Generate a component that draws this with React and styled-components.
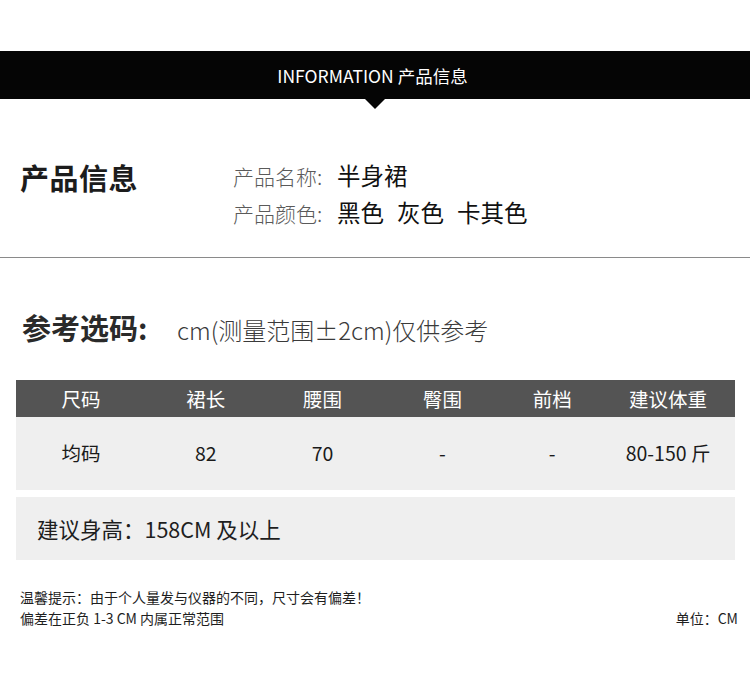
import React from "react";
import styled, { createGlobalStyle } from "styled-components";

const Global = createGlobalStyle`
  html, body { margin: 0; padding: 0; background: #fff; }
  body { font-family: "Noto Sans CJK SC", "Noto Sans", sans-serif; color: #222; }
`;

const Page = styled.div`
  width: 750px;
  height: 683px;
  overflow: hidden;
  padding-top: 51px;
  box-sizing: border-box;
`;

const Banner = styled.div`
  position: relative;
  height: 48px;
  background: #050505;
  color: #fff;
  display: flex;
  align-items: center;
  justify-content: center;
  font-size: 17.5px;
  padding-right: 5px;
  &::after {
    content: "";
    position: absolute;
    left: 364px;
    top: 47px;
    border-left: 11px solid transparent;
    border-right: 11px solid transparent;
    border-top: 11px solid #050505;
  }
`;

const InfoSection = styled.section`
  display: flex;
  align-items: flex-start;
  padding: 58px 0 0 20px;
  height: 159px;
  box-sizing: border-box;
  border-bottom: 1.5px solid #8a8a8a;
`;

const BigTitle = styled.h2`
  margin: 0;
  width: 213px;
  font-size: 29px;
  font-weight: 700;
  line-height: 40px;
  color: #1c1c1c;
  letter-spacing: 0.5px;
`;

const InfoList = styled.div`
  display: flex;
  flex-direction: column;
  margin-top: 1px;
`;

const InfoRow = styled.div`
  display: flex;
  align-items: baseline;
  height: 37px;
`;

const Label = styled.span`
  font-size: 21px;
  color: #5a5a5a;
  width: 104px;
  font-weight: 300;
`;

const Value = styled.span`
  font-size: 23.5px;
  color: #111;
  margin-right: 13px;
`;

const RefRow = styled.div`
  display: flex;
  align-items: baseline;
  padding: 48px 0 0 22px;
  height: 122px;
  box-sizing: border-box;
`;

const RefTitle = styled.span`
  font-size: 29px;
  font-weight: 700;
  color: #2a2a2a;
  width: 155px;
`;

const RefNote = styled.span`
  font-size: 24px;
  color: #3a3a3a;
  font-weight: 300;
`;

const Table = styled.div`
  margin: 0 15px 0 16px;
`;

const HeadRow = styled.div`
  display: grid;
  grid-template-columns: repeat(6, 1fr);
  height: 37px;
  background: #545454;
  color: #fff;
  align-items: center;
  font-size: 19.5px;
`;

const DataRow = styled.div`
  display: grid;
  grid-template-columns: repeat(6, 1fr);
  height: 73px;
  background: #efefef;
  color: #1a1a1a;
  align-items: center;
  font-size: 19.5px;
  padding-bottom: 3px;
  box-sizing: border-box;
`;

const Cell = styled.div`
  text-align: center;
  padding-left: ${(p) => Math.max(p.$shift || 0, 0)}px;
  padding-right: ${(p) => Math.max(-(p.$shift || 0), 0)}px;
`;

const HeightBox = styled.div`
  margin-top: 7px;
  height: 63px;
  background: #efefef;
  display: flex;
  align-items: center;
  padding-left: 21px;
  font-size: 21.5px;
  color: #1e1e1e;
`;

const Footer = styled.div`
  padding: 27px 12px 0 20px;
  font-size: 14px;
  color: #1e1e1e;
  line-height: 21px;
`;

const FooterLine = styled.div`
  display: flex;
  justify-content: space-between;
`;

const cols = ["尺码", "裙长", "腰围", "臀围", "前档", "建议体重"];
const vals = ["均码", "82", "70", "-", "-", "80-150 斤"];
const shifts = [10, 20, 14, 14, -6, -14];

export default function App() {
  return (
    <Page>
      <Global />
      <Banner>INFORMATION 产品信息</Banner>
      <InfoSection>
        <BigTitle>产品信息</BigTitle>
        <InfoList>
          <InfoRow>
            <Label>产品名称:</Label>
            <Value>半身裙</Value>
          </InfoRow>
          <InfoRow>
            <Label>产品颜色:</Label>
            <Value>黑色</Value>
            <Value>灰色</Value>
            <Value>卡其色</Value>
          </InfoRow>
        </InfoList>
      </InfoSection>
      <RefRow>
        <RefTitle>参考选码:</RefTitle>
        <RefNote>cm(测量范围±2cm)仅供参考</RefNote>
      </RefRow>
      <Table>
        <HeadRow>
          {cols.map((c, i) => (
            <Cell key={c} $shift={shifts[i]}>{c}</Cell>
          ))}
        </HeadRow>
        <DataRow>
          {vals.map((v, i) => (
            <Cell key={i} $shift={shifts[i]}>{v}</Cell>
          ))}
        </DataRow>
        <HeightBox>建议身高：158CM 及以上</HeightBox>
      </Table>
      <Footer>
        <FooterLine>温馨提示：由于个人量发与仪器的不同，尺寸会有偏差！</FooterLine>
        <FooterLine>
          <span>偏差在正负 1-3 CM 内属正常范围</span>
          <span>单位：CM</span>
        </FooterLine>
      </Footer>
    </Page>
  );
}
